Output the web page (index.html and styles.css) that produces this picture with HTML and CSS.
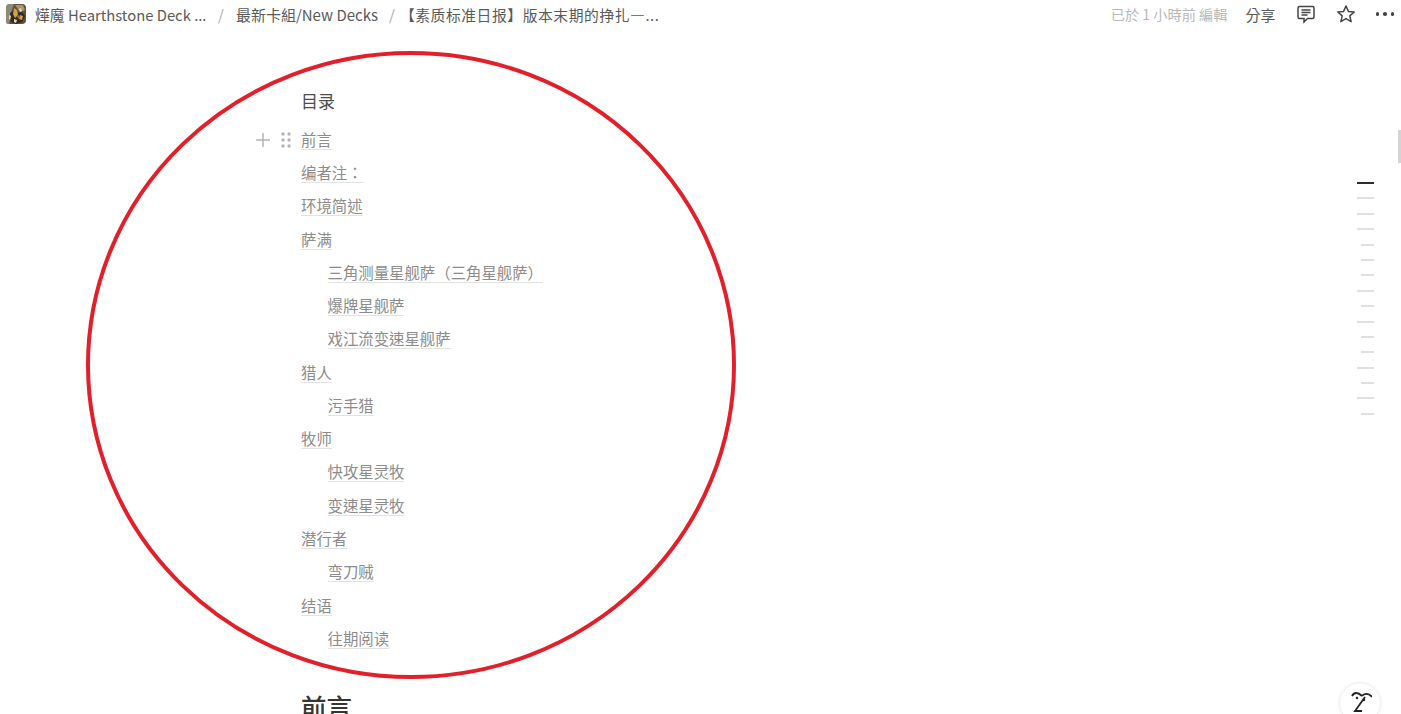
FILE: index.html
```html
<!DOCTYPE html>
<html lang="zh-Hant">
<head>
  <meta charset="UTF-8" />
  <title>【素质标准日报】版本末期的挣扎</title>
  <link rel="stylesheet" href="styles.css">
</head>
<body>

  <!-- Top bar -->
  <header class="topbar">
    <nav class="crumbs">
      <svg class="logo" viewBox="0 0 20 20" width="20" height="20">
        <rect width="20" height="20" rx="4" fill="#5d5140"/>
        <path d="M0 4a4 4 0 0 1 4-4h4L6 5 3 20H2a2 2 0 0 1-2-2z" fill="#8d8a7c"/>
        <path d="M9 1l8 0 2 5-5 2z" fill="#a89468"/>
        <path d="M4 9l4-3 3 3 5-1 3 4-3 6-6 2-5-2z" fill="#2f2a22"/>
        <path d="M8 4l3 2 1 5-3 3-2-4zM14 11l3 1-1 4-3-1z" fill="#d0a24a"/>
        <path d="M3 11l2 1-1 4-1-1zM13 5l2-1 1 3-2 1zM8 15l3 1-1 3-2-1z" fill="#e3d8bd"/>
        <path d="M11 12l2-1 1 2-2 2zM5 6l1 0 0 2-1 0z" fill="#a5662c"/>
      </svg>
      <span class="crumb crumb-first">燁魔 Hearthstone Deck ...</span>
      <span class="sep">/</span>
      <span class="crumb">最新卡組/New Decks</span>
      <span class="sep">/</span>
      <span class="crumb crumb-last">【素质标准日报】版本末期的挣扎—...</span>
    </nav>
    <div class="actions">
      <span class="edited">已於 1 小時前 編輯</span>
      <span class="share">分享</span>
      <svg class="icon icon-comment" viewBox="0 0 20 20" width="20" height="20">
        <path d="M3.500 2.500h13a1.500 1.500 0 0 1 1.500 1.500v9a1.500 1.500 0 0 1-1.500 1.500h-5l-3.500 3.500v-3.500h-4.500a1.500 1.500 0 0 1-1.500-1.500v-9a1.500 1.500 0 0 1 1.500-1.500z" fill="none" stroke="#444" stroke-width="1.500"/>
        <path d="M5.500 6h9M5.500 8.500h9M5.500 11h6" stroke="#444" stroke-width="1.300"/>
      </svg>
      <svg class="icon icon-star" viewBox="0 0 20 20" width="20" height="20">
        <path d="M10 2l2.400 5.400 5.800.6-4.400 3.900 1.300 5.800L10 14.700l-5.100 3 1.300-5.800L1.800 8l5.800-.6z" fill="none" stroke="#444" stroke-width="1.500" stroke-linejoin="round"/>
      </svg>
      <div class="dots"><i></i><i></i><i></i></div>
    </div>
  </header>

  <div class="layout">
    <main class="doc">
      <h3 class="toc-title">目录</h3>
      <ul class="toc">
        <li class="toc-row">
          <div class="handle">
            <svg viewBox="0 0 16 16" width="16" height="16"><path d="M8 1v14M1 8h14" stroke="#b4b4b4" stroke-width="1.500"/></svg>
            <svg viewBox="0 0 12 16" width="12" height="16" fill="#b4b4b4"><circle cx="3" cy="2" r="1.700"/><circle cx="9" cy="2" r="1.700"/><circle cx="3" cy="8" r="1.700"/><circle cx="9" cy="8" r="1.700"/><circle cx="3" cy="14" r="1.700"/><circle cx="9" cy="14" r="1.700"/></svg>
          </div>
          <a>前言</a>
        </li>
        <li class="toc-row"><a>编者注：</a></li>
        <li class="toc-row"><a>环境简述</a></li>
        <li class="toc-row"><a>萨满</a></li>
        <li class="toc-row sub"><a>三角测量星舰萨（三角星舰萨）</a></li>
        <li class="toc-row sub"><a>爆牌星舰萨</a></li>
        <li class="toc-row sub"><a>戏江流变速星舰萨</a></li>
        <li class="toc-row"><a>猎人</a></li>
        <li class="toc-row sub"><a>污手猎</a></li>
        <li class="toc-row"><a>牧师</a></li>
        <li class="toc-row sub"><a>快攻星灵牧</a></li>
        <li class="toc-row sub"><a>变速星灵牧</a></li>
        <li class="toc-row"><a>潜行者</a></li>
        <li class="toc-row sub"><a>弯刀贼</a></li>
        <li class="toc-row"><a>结语</a></li>
        <li class="toc-row sub"><a>往期阅读</a></li>
      </ul>
      <h2 class="section-title">前言</h2>
    </main>

    <!-- Page outline ticks -->
    <aside class="outline">
      <i class="tick active"></i>
      <i class="tick"></i>
      <i class="tick"></i>
      <i class="tick"></i>
      <i class="tick short"></i>
      <i class="tick short"></i>
      <i class="tick short"></i>
      <i class="tick"></i>
      <i class="tick short"></i>
      <i class="tick"></i>
      <i class="tick short"></i>
      <i class="tick short"></i>
      <i class="tick"></i>
      <i class="tick short"></i>
      <i class="tick"></i>
      <i class="tick short"></i>
    </aside>
  </div>

  <div class="scroll-thumb"></div>

  <!-- Red hand-drawn circle on top of the screenshot -->
  <svg class="ring" viewBox="0 0 660 640" width="660" height="640">
    <ellipse cx="330" cy="320" rx="323" ry="312" fill="none" stroke="#e2202c" stroke-width="4"/>
  </svg>

  <button type="button" class="help">
    <svg viewBox="0 0 24 24" width="24" height="24" fill="none" stroke="#222" stroke-width="1.800">
      <path d="M4 7C6 3 10 3 14 7M14 7C16 4 21 4 24 8"/>
      <path d="M17 8L7 22H14"/>
      <circle cx="9" cy="9" r="1.200" fill="#222" stroke="none"/>
      <circle cx="16" cy="11" r="1.200" fill="#222" stroke="none"/>
    </svg>
  </button>

</body>
</html>
```

FILE: styles.css
```css
html, body {
  margin: 0;
  padding: 0;
  height: 714px;
  overflow: hidden;
  background: #fff;
  font-family: "Noto Sans CJK TC", "Noto Sans", "Liberation Sans", sans-serif;
  color: #37352f;
}
.topbar {
  display: flex;
  justify-content: space-between;
  align-items: center;
  height: 28px;
  padding: 0 7px 2px 6px;
}
.crumbs {
  display: flex;
  align-items: center;
  font-size: 15px;
  color: #5a5a58;
}
.logo {
  margin-right: 9px;
}
.crumb-first {
  width: 172px;
  font-size: 14.800px;
  white-space: nowrap;
}
.crumb-last {
  margin-left: -7px;
  font-size: 14.800px;
  letter-spacing: 0.550px;
  white-space: nowrap;
}
.sep {
  color: #aaa;
  margin: 0 12px 0 11px;
}
.actions {
  display: flex;
  align-items: center;
}
.edited {
  font-size: 14.200px;
  color: #b8b8b8;
  margin-right: 18px;
}
.share {
  font-size: 15px;
  color: #5a5a58;
  margin-right: 20px;
}
.icon-comment {
  margin-right: 20px;
}
.icon-star {
  margin-right: 20px;
}
.dots {
  display: flex;
  gap: 4px;
}
.dots i {
  width: 3.500px;
  height: 3.500px;
  border-radius: 50%;
  background: #444;
}

.layout {
  display: flex;
  justify-content: space-between;
  padding-right: 27px;
}
.doc {
  padding: 58px 0 0 301px;
}
.toc-title {
  margin: 0 0 11.800px;
  font-size: 17px;
  font-weight: 400;
  line-height: 26px;
  color: #4e4e4c;
}
.toc {
  list-style: none;
  margin: 0;
  padding: 0;
}
.toc-row {
  position: relative;
  height: 33.270px;
  line-height: 25px;
  font-size: 15.400px;
  color: #8c8c8c;
}
.toc-row.sub {
  padding-left: 26.500px;
}
.toc-row a {
  display: inline-block;
  line-height: 20px;
  margin-top: 3px;
  border-bottom: 1px solid #e2e2e0;
}
.handle {
  position: absolute;
  left: -46px;
  top: 6.200px;
  display: flex;
  align-items: center;
  gap: 9px;
}
.section-title {
  margin: 30.500px 0 0;
  font-size: 25.500px;
  font-weight: 500;
  line-height: 34px;
  color: #37352f;
}

.outline {
  display: flex;
  flex-direction: column;
  align-items: flex-end;
  gap: 13.400px;
  width: 17px;
  padding-top: 152px;
}
.tick {
  display: block;
  width: 17px;
  height: 2px;
  background: #e0e0e0;
}
.tick.short {
  width: 13px;
}
.tick.active {
  background: #2c2c2c;
}
.scroll-thumb {
  position: absolute;
  top: 130px;
  right: 0;
  width: 3px;
  height: 33px;
  background: #d4d4d4;
}
.ring {
  position: absolute;
  left: 81px;
  top: 45px;
  pointer-events: none;
}
.help {
  position: absolute;
  left: 1339px;
  top: 682px;
  width: 42px;
  height: 42px;
  padding: 6px 0 0;
  display: flex;
  justify-content: center;
  background: #fff;
  border: 1px solid #f0f0f0;
  border-radius: 50%;
  box-shadow: 0 1px 4px rgba(0,0,0,0.06);
}
```
